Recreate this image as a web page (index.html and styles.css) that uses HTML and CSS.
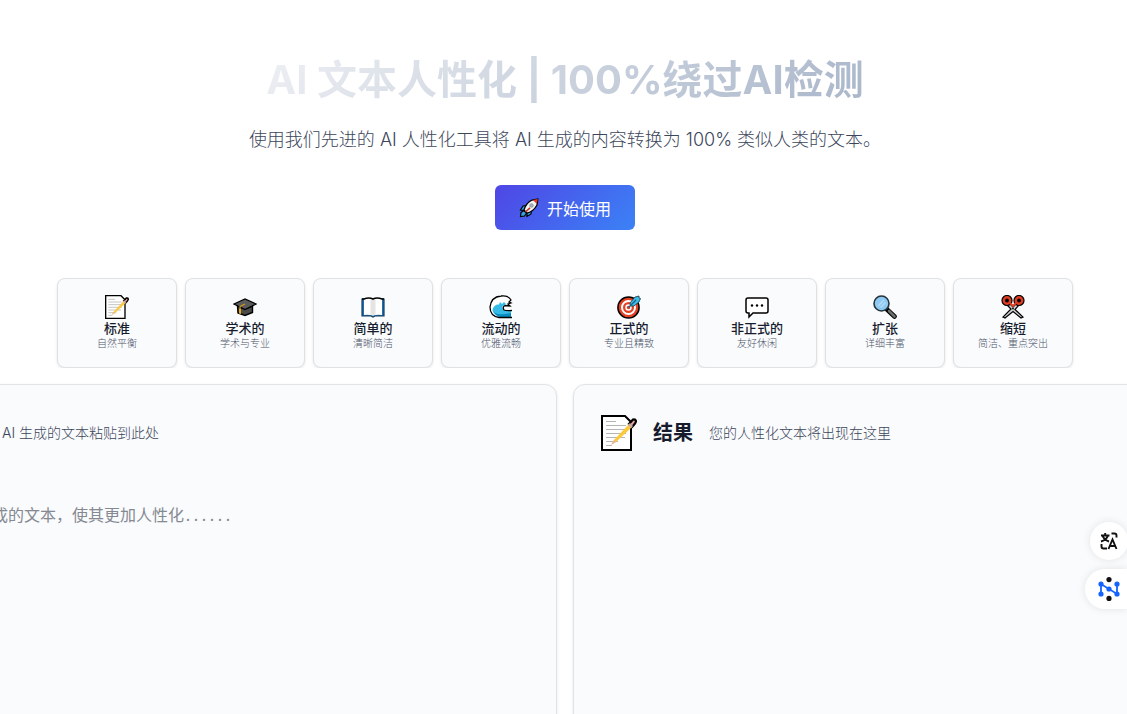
FILE: index.html
```html
<!DOCTYPE html>
<html lang="zh-CN">
<head>
<meta charset="utf-8">
<title>AI 文本人性化</title>
<link rel="stylesheet" href="styles.css">
</head>
<body>
<svg class="defs" aria-hidden="true">
  <symbol id="memo" viewBox="0 0 36 36">
    <path d="M1 1H24L30 7V35H1Z" fill="#fff" stroke="#000" stroke-width="2"/>
    <path d="M5 6.500H15M5 10.500H25M5 14.500H25M5 18.500H25M5 22.500H24M5 26.500H17M5 30.500H11" stroke="#b5b5b5" stroke-width="1.200"/>
    <path d="M28 9L32 4.500Q34.500 4 35 6Q35 8 31 12Z" fill="#eaa39b" stroke="#000" stroke-width="2.200"/>
    <path d="M13 25L28 9L31 12L15 27L10.500 29.500Z" fill="#fcc83c"/>
    <path d="M13 25L15 27L10 30Z" fill="#e8b59c"/>
    <path d="M27 10L29 8L32 11L30 13Z" fill="#c9a9a4"/>
  </symbol>
</svg>
<main class="page">
  <header class="hero">
    <h1 class="hero-title">AI 文本人性化 | 100%绕过AI检测</h1>
    <p class="hero-text">使用我们先进的 AI 人性化工具将 AI 生成的内容转换为 100% 类似人类的文本。</p>
    <button class="start" type="button">
      <svg class="rocket" viewBox="0 0 20 20" aria-hidden="true">
        <path d="M7.500 7.500L4 8L1.500 12L5.500 12.500ZM12.500 12L12 16L8 18.500L8 14.500Z" fill="#2fa6df" stroke="#000" stroke-width="1.200"/>
        <path d="M5 12.500L2 14.500L1.500 18.500L5.500 18L7.500 15Z" fill="#2fa6df" stroke="#000" stroke-width="1.200"/>
        <path d="M5 12Q7 5 13 2L18.800 1L18 7Q14.500 13.500 8 15.200Z" fill="#f3f3f3" stroke="#000" stroke-width="1.300"/>
        <path d="M14 2L18.800 1L17.800 6Z" fill="#df3b28"/>
        <path d="M6.500 14L11 9.800" stroke="#c73327" stroke-width="1.600"/>
        <circle cx="12.500" cy="7.500" r="1.800" fill="#a6b8c2" stroke="#777" stroke-width=".6"/>
      </svg>
      <span>开始使用</span>
    </button>
  </header>

  <section class="modes">
    <button class="mode" type="button">
      <svg class="mode-icon" aria-hidden="true"><use href="#memo"/></svg>
      <span class="mode-name">标准</span><span class="mode-text">自然平衡</span>
    </button>
    <button class="mode" type="button">
      <svg class="mode-icon" viewBox="0 0 24 24" aria-hidden="true">
        <path d="M4.500 11L12 14L19.500 11V17.500L12 20.500L5 18Z" fill="#4a4a4a" stroke="#000" stroke-width="1.400"/>
        <path d="M1 9L12 4L23 9L12 14.500Z" fill="#5b5b5b" stroke="#000" stroke-width="1.300"/>
        <path d="M12 9L7 11.500V15" fill="none" stroke="#d79a17" stroke-width="1.200"/>
        <path d="M6 14H8V19L6 18.500Z" fill="#e8aa22"/>
      </svg>
      <span class="mode-name">学术的</span><span class="mode-text">学术与专业</span>
    </button>
    <button class="mode" type="button">
      <svg class="mode-icon" viewBox="0 0 24 24" aria-hidden="true">
        <path d="M1 4H23V21H14L12 22L10 21H1Z" fill="#246fa9" stroke="#143d5f" stroke-width="1.200"/>
        <path d="M3 4Q8 2 12 4Q16 2 21 4V20Q16 19.500 12 20.500Q8 19.500 3 20Z" fill="#fff"/>
        <path d="M9.500 4L12 5L14.500 4V19.500L12 20.500L9.500 19.500Z" fill="#e4e4e4"/>
        <path d="M1 4H3Q8 2 12 4Q16 2 21 4H23" fill="none" stroke="#000" stroke-width="1.600"/>
      </svg>
      <span class="mode-name">简单的</span><span class="mode-text">清晰简洁</span>
    </button>
    <button class="mode" type="button">
      <svg class="mode-icon" viewBox="0 0 24 24" aria-hidden="true">
        <path d="M23 22.500H10Q1 21 1 12Q2 2 12 1Q19 0 22 5L20 7L22 8L19 9L21 11L16 10.500Q13 12 15 15Q17 16 23 15.500Z" fill="#fff"/>
        <path d="M22 22H11Q4 20 3.500 15Q5 9 10 9.500L11 7L13 9L15 7L17 9L14 11Q12 13 15 15Q18 17 22 15.500Z" fill="#35bbe5"/>
        <path d="M5 17Q9 21 22 18V22H11Q7 21 5 17Z" fill="#078bc0"/>
        <path d="M23 22.500H10Q1 21 1 12Q2 2 12 1Q19 0 22 5L20 7L22 8L19 9L21 11L16 10.500Q13 12 15 15Q17 16 23 15.500" fill="none" stroke="#000" stroke-width="1.300"/>
      </svg>
      <span class="mode-name">流动的</span><span class="mode-text">优雅流畅</span>
    </button>
    <button class="mode" type="button">
      <svg class="mode-icon" viewBox="0 0 24 24" aria-hidden="true">
        <circle cx="11.500" cy="12.500" r="10.600" fill="#e44125" stroke="#000" stroke-width="1.500"/>
        <circle cx="11.500" cy="12.500" r="6.500" fill="none" stroke="#fff" stroke-width="2"/>
        <circle cx="11.500" cy="12.500" r="2.500" fill="#e44125" stroke="#fff" stroke-width="1.500"/>
        <path d="M13 8L18 2L22 1V3L23.500 3.500L22 7L17 11L13.500 11Z" fill="#3cbbe8" stroke="#153644" stroke-width=".8"/>
        <path d="M11.500 12.500L19 5" stroke="#176487" stroke-width="1.200"/>
      </svg>
      <span class="mode-name">正式的</span><span class="mode-text">专业且精致</span>
    </button>
    <button class="mode" type="button">
      <svg class="mode-icon" viewBox="0 0 24 24" aria-hidden="true">
        <path d="M3 3H21Q23 3 23 5V16Q23 18 21 18H8L4 22V18H3Q1 18 1 16V5Q1 3 3 3Z" fill="#fff" stroke="#000" stroke-width="1.500"/>
        <circle cx="7" cy="10.500" r="1.200"/><circle cx="12" cy="10.500" r="1.200"/><circle cx="17" cy="10.500" r="1.200"/>
      </svg>
      <span class="mode-name">非正式的</span><span class="mode-text">友好休闲</span>
    </button>
    <button class="mode" type="button">
      <svg class="mode-icon" viewBox="0 0 24 24" aria-hidden="true">
        <path d="M13.500 14L21.500 21.500" stroke="#000" stroke-width="4.600" stroke-linecap="round"/>
        <path d="M16 16L21.500 21.500" stroke="#69716d" stroke-width="2.600" stroke-linecap="round"/>
        <circle cx="8.500" cy="8.500" r="7.500" fill="#8dc9f2" stroke="#26343d" stroke-width="1.600"/>
        <path d="M5 11L11 5M7.500 12.500L12.500 7.500" stroke="#b4dcf8" stroke-width="1.500"/>
      </svg>
      <span class="mode-name">扩张</span><span class="mode-text">详细丰富</span>
    </button>
    <button class="mode" type="button">
      <svg class="mode-icon" viewBox="0 0 24 24" aria-hidden="true">
        <path d="M8 8L12 12L16 8L18 10L14 14.500L22 22L20 23L12 16.500L4 23L2 22L10 14L6 10Z" fill="#d0d0d0" stroke="#000" stroke-width="1.200"/>
        <circle cx="6" cy="5.500" r="5" fill="#e23d22" stroke="#000" stroke-width="1.200"/><circle cx="18" cy="5.500" r="5" fill="#e23d22" stroke="#000" stroke-width="1.200"/>
        <path d="M9 8L12 11L15 8" fill="none" stroke="#e23d22" stroke-width="2"/>
        <circle cx="6" cy="5.500" r="1.900"/><circle cx="18" cy="5.500" r="1.900"/>
        <circle cx="12" cy="13.500" r=".9"/>
      </svg>
      <span class="mode-name">缩短</span><span class="mode-text">简洁、重点突出</span>
    </button>
  </section>

  <section class="panels">
    <div class="panel">
      <div class="panel-head"><label class="panel-text" for="source">AI 生成的文本粘贴到此处</label></div>
      <textarea class="source" id="source" placeholder="成的文本，使其更加人性化......"></textarea>
    </div>
    <div class="panel result">
      <div class="panel-head">
        <svg class="panel-icon" aria-hidden="true"><use href="#memo"/></svg>
        <h2 class="panel-title">结果</h2>
        <p class="panel-text">您的人性化文本将出现在这里</p>
      </div>
    </div>
  </section>
</main>

<aside class="tools">
  <button class="tool translate" type="button" aria-label="翻译">
    <svg width="18" height="18" viewBox="0 0 18 18" fill="none" stroke="#111" stroke-width="1.900" aria-hidden="true">
      <path d="M1 3.500H9.500M5.200 1V3.500M2.500 3.500Q4 8 9 9.500M8 3.500Q6.500 8 1 9.500M11.500 1.500H14.500Q16.500 1.500 16.500 3.500V5.500M1.500 12V14.500Q1.500 16.500 3.500 16.500H7M8.500 17L12.500 7.500L16.500 17M10 14H15"/>
    </svg>
  </button>
  <button class="tool network" type="button" aria-label="助手">
    <svg width="24" height="24" viewBox="0 0 24 24" aria-hidden="true">
      <path d="M4 17V7L20 17V7" fill="none" stroke="#1463ff" stroke-width="1.800"/>
      <g fill="#1463ff"><circle cx="4" cy="7" r="2.600"/><circle cx="4" cy="17" r="2.600"/><circle cx="12" cy="12" r="2.600"/><circle cx="20" cy="7" r="2.600"/><circle cx="20" cy="17" r="2.600"/></g>
      <circle cx="12" cy="2.600" r="2.600" fill="#111"/><circle cx="12" cy="21.400" r="2.600" fill="#111"/>
    </svg>
  </button>
</aside>
</body>
</html>
```
FILE: styles.css
```css
* { box-sizing: border-box; }
body {
  margin: 0;
  background: #fff;
  color: #161c2d;
  font-family: Inter, "Noto Sans CJK SC", sans-serif;
}
h1, h2, p { margin: 0; }
button { font: inherit; color: inherit; }
.defs { position: absolute; width: 0; height: 0; }
.page {
  display: flex;
  flex-direction: column;
  min-height: 100vh;
  padding-left: 3px;
  overflow: hidden;
}
.hero {
  display: flex;
  flex-direction: column;
  align-items: center;
  padding: 56px 16px 48px;
  text-align: center;
}
.hero-title {
  font-size: 40px;
  line-height: 48px;
  font-weight: 700;
  color: transparent;
  background: linear-gradient(135deg, #edeff3, #a9b6ca);
  background-clip: text;
  -webkit-background-clip: text;
}
.hero-text {
  margin-top: 22px;
  font-size: 18px;
  line-height: 28px;
  font-weight: 300;
  color: #3c465b;
}
.start {
  display: flex;
  align-items: center;
  gap: 8px;
  height: 45px;
  margin-top: 31px;
  padding: 0 24px;
  border: 0;
  border-radius: 6px;
  background: linear-gradient(135deg, #4f46e5, #3b82f6);
  color: #fff;
  font-size: 16px;
}
.rocket { width: 20px; height: 20px; }
.modes {
  display: grid;
  grid-template-columns: repeat(8, 120px);
  justify-content: center;
  gap: 8px;
  overflow: hidden;
}
.mode {
  display: flex;
  flex-direction: column;
  align-items: center;
  height: 90px;
  padding: 16px 4px;
  border: 1px solid #dfe1e4;
  border-radius: 8px;
  background: #fafbfd;
  box-shadow: 0 1px 3px rgba(0, 0, 0, .1);
}
.mode-icon { width: 24px; height: 24px; flex: none; }
.mode-name { font-size: 13px; line-height: 18px; font-weight: 500; }
.mode-text { font-size: 10px; line-height: 12px; font-weight: 300; color: #4a5468; }
.panels {
  display: grid;
  grid-template-columns: 1fr 1fr;
  gap: 16px;
  flex: 1;
  margin: 16px -29px 0;
}
.panel {
  display: flex;
  flex-direction: column;
  min-height: 344px;
  padding: 24px 27px;
  border: 1px solid #e1e3e6;
  border-radius: 12px;
  background: #fafbfd;
  box-shadow: 0 1px 3px rgba(0, 0, 0, .1);
}
.panel-head { display: flex; align-items: center; gap: 16px; height: 48px; }
.panel-icon { width: 36px; height: 36px; }
.panel-title { font-size: 20px; line-height: 28px; font-weight: 700; }
.panel-text { font-size: 14px; line-height: 20px; font-weight: 300; color: #3c465b; }
.source {
  flex: 1;
  margin: 45px 0 0 -10px;
  padding: 0;
  border: 0;
  outline: 0;
  resize: none;
  background: transparent;
  font-family: "Noto Sans Mono CJK SC", "Noto Sans CJK SC", monospace;
  font-size: 16px;
  line-height: 24px;
  font-weight: 300;
}
.source::placeholder { color: #858992; }
.tools {
  position: fixed;
  right: 0;
  top: 522px;
  display: flex;
  flex-direction: column;
  align-items: flex-end;
  gap: 9px;
}
.tool {
  display: flex;
  align-items: center;
  justify-content: center;
  padding: 0;
  border: 0;
  background: #fff;
  box-shadow: 0 0 8px rgba(0, 0, 0, .1);
}
.translate { width: 38px; height: 38px; margin-right: -1px; border-radius: 50%; }
.network { width: 42px; height: 40px; padding-left: 6px; border-radius: 20px 0 0 20px; }
```
